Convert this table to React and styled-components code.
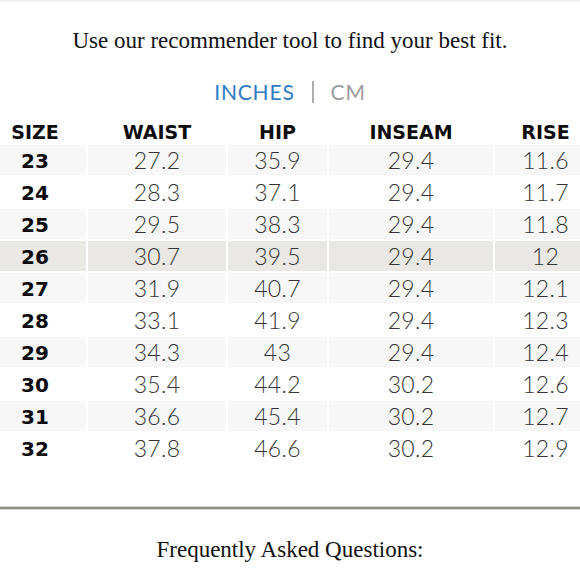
import React from "react";
import styled, { createGlobalStyle } from "styled-components";

const Global = createGlobalStyle`
  html, body { margin: 0; padding: 0; background: #fff; }
  body { width: 580px; }
`;

const Page = styled.div`
  width: 580px;
  height: 580px;
  overflow: hidden;
  border-top: 2px solid #f1f1f1;
  box-sizing: border-box;
  display: flex;
  flex-direction: column;
`;

const Lead = styled.p`
  margin: 26px 0 0;
  font-family: "Liberation Serif", "Times New Roman", serif;
  font-size: 23px;
  line-height: 26px;
  color: #111;
  text-align: center;
`;

const Units = styled.div`
  margin-top: 26px;
  display: flex;
  justify-content: center;
  align-items: center;
  gap: 17px;
  font-family: Lato, sans-serif;
  font-size: 21px;
  line-height: 24px;
  letter-spacing: 0.8px;
`;

const Unit = styled.span`
  color: ${(p) => (p.$active ? "#2d7cc4" : "#9d9d9d")};
`;

const Sep = styled.span`
  width: 2px;
  height: 22px;
  background: #adadad;
`;

const Grid = styled.div`
  display: grid;
  grid-template-columns: 86px 138px 99px 164px 1fr;
  column-gap: 2px;
`;

const HeadRow = styled(Grid)`
  margin-top: 9px;
  height: 30px;
  align-items: end;
`;

const Head = styled.div`
  font-family: "DejaVu Sans", sans-serif;
  font-weight: 700;
  font-size: 19px;
  line-height: 22px;
  color: #0d0d0d;
  text-align: center;
  padding-left: ${(p) => (p.$pos === "last" ? "16px" : "0")};
  padding-right: ${(p) => (p.$pos === "first" ? "16px" : "0")};
`;

const Body = styled.div`
  margin-top: 2px;
  display: flex;
  flex-direction: column;
  gap: 2px;
`;

const tones = { alt: "#f7f7f7", plain: "#ffffff", hl: "#e9e8e4" };

const Cell = styled.div`
  height: 30px;
  background: ${(p) => tones[p.$tone]};
  text-align: center;
  padding-left: ${(p) => (p.$pos === "last" ? "16px" : "0")};
  padding-right: ${(p) => (p.$pos === "first" ? "16px" : "0")};
`;

const SizeCell = styled(Cell)`
  font-family: "DejaVu Sans", sans-serif;
  font-weight: 700;
  font-size: 20px;
  line-height: 32px;
  color: #0a0a0a;
`;

const ValueCell = styled(Cell)`
  font-family: Lato, sans-serif;
  font-weight: 300;
  font-size: 23px;
  line-height: 31px;
  color: #353535;
  letter-spacing: 0.3px;
`;

const Rule = styled.hr`
  margin: 44px 0 0;
  border: 0;
  height: 2px;
  background: #8f8f89;
  box-shadow: 0 -1px 0 #d2d2cb, 0 1px 0 #d2d2cb;
`;

const Faq = styled.p`
  margin: 28px 0 0;
  font-family: "Liberation Serif", "Times New Roman", serif;
  font-size: 23px;
  line-height: 26px;
  color: #111;
  text-align: center;
`;

const headers = ["SIZE", "WAIST", "HIP", "INSEAM", "RISE"];

const rows = [
  ["23", "27.2", "35.9", "29.4", "11.6"],
  ["24", "28.3", "37.1", "29.4", "11.7"],
  ["25", "29.5", "38.3", "29.4", "11.8"],
  ["26", "30.7", "39.5", "29.4", "12"],
  ["27", "31.9", "40.7", "29.4", "12.1"],
  ["28", "33.1", "41.9", "29.4", "12.3"],
  ["29", "34.3", "43", "29.4", "12.4"],
  ["30", "35.4", "44.2", "30.2", "12.6"],
  ["31", "36.6", "45.4", "30.2", "12.7"],
  ["32", "37.8", "46.6", "30.2", "12.9"],
];

const posOf = (i, n) => (i === 0 ? "first" : i === n - 1 ? "last" : "mid");

export default function App() {
  return (
    <>
      <Global />
      <Page>
        <Lead>Use our recommender tool to find your best fit.</Lead>
        <Units>
          <Unit $active>INCHES</Unit>
          <Sep />
          <Unit>CM</Unit>
        </Units>
        <HeadRow>
          {headers.map((h, i) => (
            <Head key={h} $pos={posOf(i, headers.length)}>
              {h}
            </Head>
          ))}
        </HeadRow>
        <Body>
          {rows.map((r, ri) => {
            const tone = r[0] === "26" ? "hl" : ri % 2 === 0 ? "alt" : "plain";
            return (
              <Grid key={r[0]}>
                {r.map((v, i) =>
                  i === 0 ? (
                    <SizeCell key={i} $tone={tone} $pos="first">
                      {v}
                    </SizeCell>
                  ) : (
                    <ValueCell key={i} $tone={tone} $pos={posOf(i, r.length)}>
                      {v}
                    </ValueCell>
                  )
                )}
              </Grid>
            );
          })}
        </Body>
        <Rule />
        <Faq>Frequently Asked Questions:</Faq>
      </Page>
    </>
  );
}
